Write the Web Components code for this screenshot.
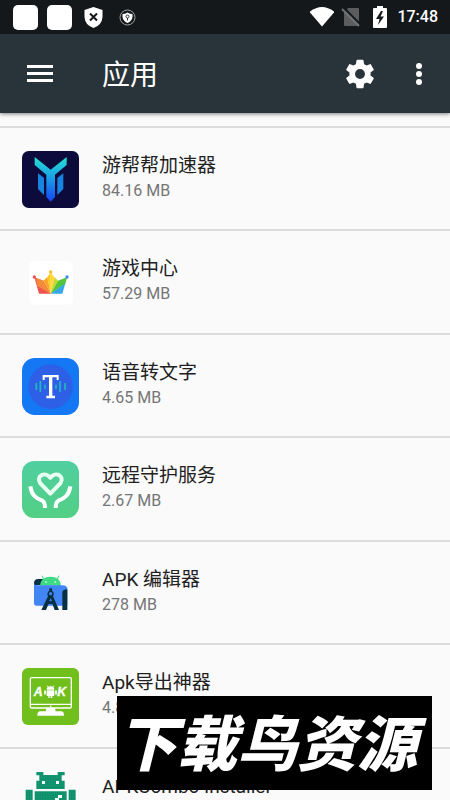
<!DOCTYPE html>
<html lang="zh-CN">
<head>
<meta charset="utf-8">
<meta name="viewport" content="width=device-width, initial-scale=1">
<title>应用</title>
<style>
  body { margin: 0; background: #fafafa; font-family: Roboto, "Noto Sans CJK SC", sans-serif; color: #212121; }
</style>
</head>
<body>
<apps-screen>
  <status-bar slot="top"></status-bar>
  <app-toolbar slot="top">应用</app-toolbar>
  <app-row size="84.16 MB" icon="boost">游帮帮加速器</app-row>
  <app-row size="57.29 MB" icon="crown">游戏中心</app-row>
  <app-row size="4.65 MB" icon="speech">语音转文字</app-row>
  <app-row size="2.67 MB" icon="care">远程守护服务</app-row>
  <app-row size="278 MB" icon="studio">APK 编辑器</app-row>
  <app-row size="4.83 MB" icon="export">Apk导出神器</app-row>
  <app-row size="12.4 MB" icon="robot">APKCombo Installer</app-row>
  <brand-banner slot="overlay">下载鸟资源</brand-banner>
</apps-screen>

<script>
const ICONS = {
  boost: `<defs><linearGradient id="g" gradientUnits="userSpaceOnUse" x1="0" y1="18" x2="0" y2="150"><stop offset="0" stop-color="#25e0d0"/><stop offset=".5" stop-color="#1a9bea"/><stop offset="1" stop-color="#1646f4"/></linearGradient></defs>
    <rect width="171" height="171" rx="20" fill="#0d0b3c"/>
    <path fill="url(#g)" d="M38 18L86 56L134 18V42L99 71V138L86 152L73 138V71L38 42Z"/>
    <path fill="#1784df" d="M48 67L66 81V132L48 114ZM124 67L106 81V132L124 114Z"/>`,
  crown: `<rect x="21" y="20" width="132" height="132" rx="18" fill="#fff"/>
    <path fill="#ef5350" d="M37 70L64 80L86 119H51Z"/><path fill="#f58a3c" d="M42 72L62 79L86 119L46 96Z"/>
    <path fill="#f9a825" d="M64 80L76 69L86 119Z"/><path fill="#fbc91b" d="M76 69L86 56V119Z"/>
    <path fill="#ffd83a" d="M86 56L98 70L86 119Z"/><path fill="#c5d92c" d="M98 70L108 80L86 119Z"/>
    <path fill="#56c43a" d="M108 80L135 70L130 90L86 119Z"/><path fill="#36a7e8" d="M130 88L121 119H86Z"/>
    <circle cx="37" cy="69" r="5" fill="#ef5350"/><circle cx="86" cy="54" r="5" fill="#f8bd20"/><circle cx="135" cy="69" r="5" fill="#4286e8"/>`,
  speech: `<rect width="171" height="171" rx="38" fill="#1478f5"/><circle cx="86" cy="86" r="67" fill="#2d60e6"/>
    <path stroke="#22b9bd" stroke-width="5" d="M43 75V96M55 69V102M69 80V92M102 80V92M114 69V102M129 75V96"/>
    <path fill="#fff" d="M62 51H110V66H104V58H91V113H99V121H73V113H81V58H68V66H62Z"/>`,
  care: `<defs><linearGradient id="g" x1="0" y1="0" x2="0" y2="1"><stop offset="0" stop-color="#50cfa0"/><stop offset="1" stop-color="#53cf85"/></linearGradient></defs>
    <rect width="171" height="171" rx="36" fill="url(#g)"/>
    <path fill="none" stroke="#e9fff2" stroke-width="12" stroke-linejoin="round" d="M85 98L55 67C40 46 69 29 85 50C101 29 130 46 115 67Z"/>
    <path fill="none" stroke="#fff" stroke-width="12" d="M25 76C29 102 40 111 61 119C67 122 69 127 69 141M145 76C141 102 130 111 109 119C103 122 101 127 101 141"/>`,
  studio: `<path fill="#073042" d="M49 42H63V60H36V55Q36 42 49 42Z"/>
    <path stroke="#3ddc84" stroke-width="3" d="M65 43L60 32M106 43L111 32"/><path fill="#3ddc84" d="M54 62Q56 35 86 35Q115 35 117 62Z"/>
    <circle cx="72" cy="51" r="2.5" fill="#fff"/><circle cx="100" cy="51" r="2.5" fill="#fff"/>
    <path fill="#4285f4" d="M36 55Q37 61 45 61H122Q132 61 136 68V122H44Q36 122 36 114Z"/>
    <path fill="#073042" d="M121 82Q122 73 136 73V135H121Z"/>
    <path fill="#073042" fill-rule="evenodd" d="M82 70H90V77Q99 84 93 94L111 135H98L91 116Q85 118 80 116L72 135H58L78 94Q73 83 82 77ZM86 81A5 5 0 1 0 86 91A5 5 0 1 0 86 81ZM86 100L82 108Q86 110 90 108Z"/>`,
  export: `<rect width="171" height="171" rx="18" fill="#70bf1d"/>
    <rect x="25" y="29" width="123" height="91" rx="4" fill="none" stroke="#fff" stroke-width="4"/>
    <path stroke="#fff" stroke-width="4" d="M25 109H148"/><circle cx="86" cy="115" r="2.5" fill="#fff"/>
    <path fill="#fff" d="M73 120H99L101 130H119Q126 131 126 143H46Q46 131 53 130H71Z"/>
    <g fill="#fff" font-family="Liberation Sans, sans-serif" font-size="37" font-weight="700" font-style="italic" stroke="#fff"><text x="35" y="83">A</text><text x="106" y="83">K</text></g>
    <path fill="#fff" d="M74 65Q75 55 85 55Q96 55 97 65ZM74 67H97V81Q97 84 94 84H91V90H86V84H83V90H79V84H74Z"/>
    <path stroke="#fff" stroke-width="3" d="M79 58L76 53M92 58L96 53"/><path stroke="#fff" stroke-width="5" stroke-linecap="round" d="M69 69V78M102 69V78"/>`,
  robot: `<defs><pattern id="p" width="8" height="8" patternUnits="userSpaceOnUse"><rect width="8" height="8" fill="#0c8f6b"/><path stroke="#34aa8c" d="M0 0H8M0 0V8"/></pattern></defs>
    <path fill="url(#p)" fill-rule="evenodd" d="M43 0H64V9H107V0H128V10H119V26H128V51H43V26H52V10H43ZM60 27V36H69V27ZM102 27V36H111V27ZM11 53H32V120H11ZM140 53H161V120H140ZM38 58H134V140H38ZM102 78V86H85V95H111V78Z"/>
    <path fill="#fafafa" d="M108 69H120V78H108ZM99 78H111V87H99Z"/>`
};

/* Attaches an open shadow root cloned from a template. */
class ShadowElement extends HTMLElement {
  connectedCallback() {
    if (this.shadowRoot) return;
    const template = document.createElement('template');
    template.innerHTML = this.view();
    this.attachShadow({ mode: 'open' }).append(template.content.cloneNode(true));
  }
}

customElements.define('apps-screen', class extends ShadowElement {
  view() { return `<style>
      :host { display: flex; flex-direction: column; height: 100vh; position: relative; overflow: hidden; }
      header { position: relative; z-index: 1; box-shadow: 0 1px 4px rgba(0,0,0,.5); }
      main { flex: 1; min-height: 0; overflow-y: auto; scrollbar-width: none; padding-top: 13px; }
    </style>
    <header><slot name="top"></slot></header>
    <main><div role="list"><slot></slot></div></main>
    <slot name="overlay"></slot>`; }
});

customElements.define('status-bar', class extends ShadowElement {
  view() { return `<style>
      :host { display: flex; justify-content: space-between; align-items: center; height: 34px; padding: 0 12px 0 13px; background: #14181b; color: #fff; }
      div { display: flex; align-items: center; }
      .notices { gap: 9px; } .system { gap: 5px; }
      svg { display: block; } time { font-size: 16px; line-height: 20px; font-weight: 500; }
    </style>
    <div class="notices">
      <svg width="25" height="25"><rect width="25" height="25" rx="5" fill="#fff"/></svg>
      <svg width="25" height="25"><rect width="25" height="25" rx="5" fill="#fff"/></svg>
      <svg width="25" height="25" viewBox="0 0 25 25"><path fill="#fff" d="M12.500 2L21.500 5V12Q21 20 12.500 23Q4 20 3.500 12V5Z"/><path stroke="#14181b" stroke-width="2" d="M9 8.500L16 15.500M16 8.500L9 15.500"/></svg>
      <svg width="25" height="25" viewBox="0 0 25 25"><circle cx="12.500" cy="12.500" r="7.500" fill="none" stroke="#a0a2a3"/><path fill="#fff" d="M12.500 7.500Q15 9 17.500 9V12Q17 16 12.500 18Q8 16 7.500 12V9Q10 9 12.500 7.500Z"/><circle cx="12.500" cy="11.500" r="1.500" fill="none" stroke="#333"/><path stroke="#333" d="M12.500 13V15.500"/></svg>
    </div>
    <div class="system">
      <svg width="24" height="24" viewBox="0 0 24 24"><path fill="#fff" d="M12 21.500L-.5 7Q12-3 24.500 7Z"/></svg>
      <svg width="24" height="24" viewBox="0 0 24 24"><path fill="#5b5d5f" d="M9 3H19Q20 3 20 4V20Q20 21 19 21H6Q5 21 5 20V8Z"/><path stroke="#14181b" stroke-width="2" d="M5 3L22 20"/><path stroke="#707274" stroke-width="2" d="M3 4L20 21"/></svg>
      <svg width="24" height="24" viewBox="0 0 24 24"><path fill="#fff" d="M9 1H15V3H18Q19 3 19 4V22Q19 23 18 23H6Q5 23 5 22V4Q5 3 6 3H9Z"/><path fill="#14181b" d="M13 6L8 14H11.500L10 20L16 11.500H12.500L15 6Z"/></svg>
      <time>17:48</time>
    </div>`; }
});

customElements.define('app-toolbar', class extends ShadowElement {
  view() { return `<style>
      :host { display: flex; align-items: center; height: 79px; padding: 0 7px 0 16px; background: #29333a; color: #fff; }
      button { display: grid; place-items: center; width: 48px; height: 48px; padding: 0; border: 0; background: none; color: inherit; }
      h1 { flex: 1; margin: 0 0 0 38px; padding-top: 4px; font-size: 28px; line-height: 40px; font-weight: 400; }
      .actions { display: flex; gap: 11px; }
      svg { display: block; fill: currentColor; }
    </style>
    <button aria-label="菜单"><svg width="26" height="18"><path d="M0 0H26V3H0ZM0 7H26V10H0ZM0 14H26V17H0Z"/></svg></button>
    <h1><slot></slot></h1>
    <div class="actions">
      <button aria-label="设置"><svg width="34" height="34" viewBox="0 0 24 24"><path d="M19.43 12.98c.04-.32.07-.64.07-.98s-.03-.66-.07-.98l2.11-1.650c.19-.15.24-.42.12-.64l-2-3.460c-.12-.22-.39-.3-.61-.22l-2.490 1c-.52-.4-1.080-.73-1.690-.98l-.38-2.650A.49.49 0 0 0 14 2h-4c-.25 0-.46.18-.49.42l-.38 2.650c-.61.25-1.170.59-1.690.98l-2.490-1c-.23-.09-.49 0-.61.22l-2 3.460c-.13.22-.07.49.12.64l2.110 1.650c-.04.32-.07.65-.07.98s.03.66.07.98l-2.110 1.650c-.19.15-.24.42-.12.64l2 3.460c.12.22.39.3.61.22l2.490-1c.52.4 1.080.73 1.690.98l.38 2.650c.03.24.24.42.49.42h4c.25 0 .46-.18.49-.42l.38-2.650c.61-.25 1.170-.59 1.690-.98l2.490 1c.23.09.49 0 .61-.22l2-3.460c.12-.22.07-.49-.12-.64zM12 15.500a3.500 3.500 0 1 1 0-7 3.500 3.500 0 0 1 0 7z"/></svg></button>
      <button aria-label="更多选项"><svg width="8" height="24"><circle cx="4" cy="4" r="3"/><circle cx="4" cy="12" r="3"/><circle cx="4" cy="20" r="3"/></svg></button>
    </div>`; }
});

customElements.define('app-row', class extends ShadowElement {
  view() {
    this.setAttribute('role', 'listitem');
    return `<style>
      :host { display: block; box-sizing: border-box; height: 103px; border-top: 2px solid #dcdcdc; }
      :host(:nth-of-type(even)) { height: 104px; }
      a { display: flex; gap: 23px; padding: 23px 22px 0; color: inherit; text-decoration: none; }
      svg { display: block; flex: none; width: 57px; height: 57px; }
      .text { min-width: 0; }
      .name { font-size: 19px; line-height: 30px; white-space: nowrap; }
      .size { font-size: 16px; line-height: 20px; color: #757575; }
    </style>
    <a href="#"><svg viewBox="0 0 171 171" aria-hidden="true">${ICONS[this.getAttribute('icon')]}</svg>
    <div class="text"><div class="name"><slot></slot></div><div class="size">${this.getAttribute('size')}</div></div></a>`;
  }
});

customElements.define('brand-banner', class extends ShadowElement {
  view() { return `<style>
      :host { position: absolute; z-index: 2; right: 18px; bottom: 10px; padding: 0 15px 6px 0; background: #000; color: #fff;
        font: italic 900 60px/88px "Noto Sans CJK SC", sans-serif; white-space: nowrap; }
    </style><slot></slot>`; }
});
</script>
</body>
</html>
